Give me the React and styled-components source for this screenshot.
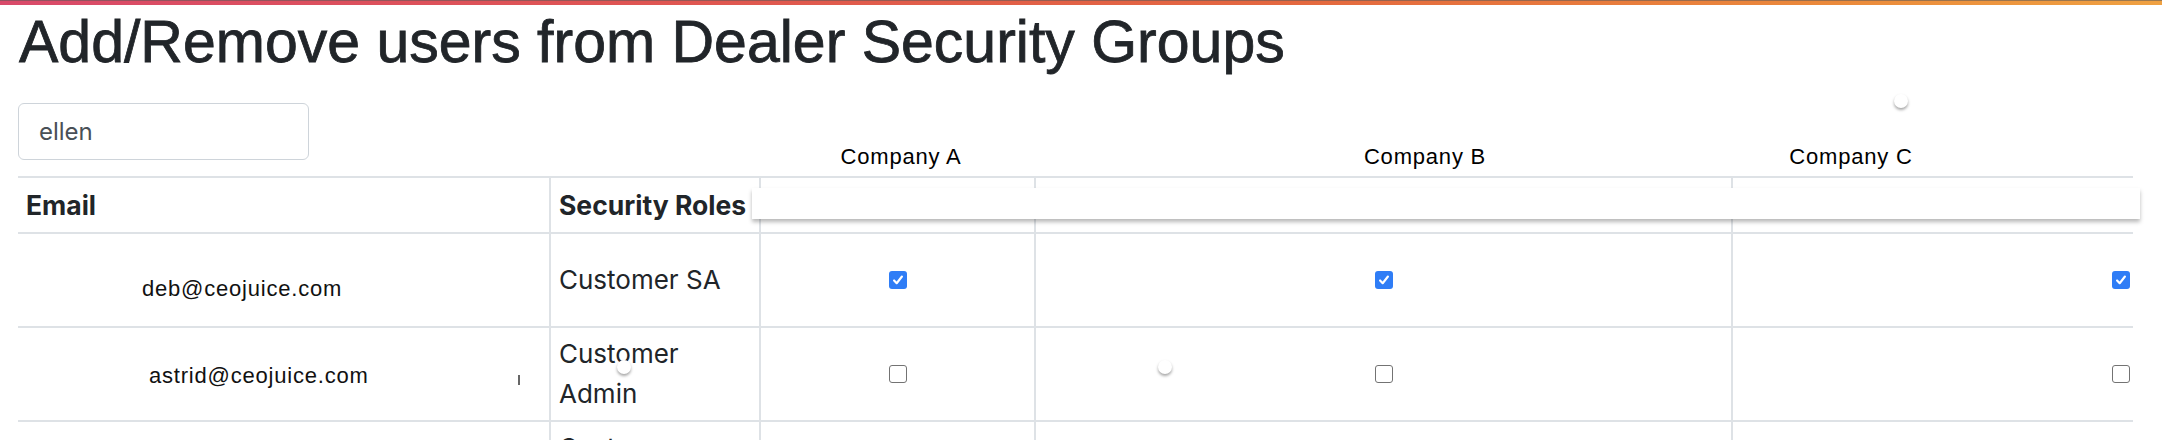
import React, { useState } from 'react';
import styled, { createGlobalStyle } from 'styled-components';

const GlobalStyle = createGlobalStyle`
  html, body { margin: 0; padding: 0; background: #fff; }
  body { font-family: Inter, "Noto Sans", sans-serif; color: #212529; }
  * { box-sizing: border-box; }
`;

const TopBar = styled.div`
  height: 5px;
  border-top: 1px solid rgba(90, 90, 90, 0.55);
  background: linear-gradient(90deg, #d94a6a 0%, #df5552 30%, #e4683f 60%, #eb8a3b 85%, #efa142 100%);
`;

const Page = styled.div`
  position: relative;
  padding: 0 29px 0 18px;
`;

const Title = styled.h1`
  margin: 2px 0 25px 1px;
  font-family: "Liberation Sans", Arial, sans-serif;
  font-weight: 400;
  font-size: 59px;
  line-height: 1.2;
  color: #212529;
  -webkit-text-stroke: 0.8px #212529;
`;

const Toolbar = styled.div`
  display: flex;
  align-items: flex-end;
  height: 73px;
`;

const Search = styled.input`
  width: 291px;
  height: 57px;
  margin-bottom: 16px;
  padding: 0 20px;
  border: 1.5px solid #ced4da;
  border-radius: 6px;
  font: 400 24px Inter, sans-serif;
  color: #495057;
  outline: none;
`;

const CompanyLabel = styled.span`
  width: 200px;
  margin-left: ${p => p.$gap}px;
  margin-bottom: 6px;
  text-align: center;
  font: 22px/26px "Liberation Sans", Arial, sans-serif;
  letter-spacing: 0.8px;
  color: #000;
`;

const Table = styled.div`
  position: relative;
  width: 2115px;
`;

const Row = styled.div`
  display: grid;
  grid-template-columns: 531px 210px 275px 697px 402px;
  height: ${p => p.$h}px;
  border-top: 2px solid #dee2e6;
`;

const Cell = styled.div`
  position: relative;
  display: flex;
  align-items: center;
  justify-content: ${p => p.$justify || 'flex-start'};
  padding: 0 ${p => p.$right ?? 8}px 0 8px;
  border-left: ${p => (p.$first ? 'none' : '2px solid #dee2e6')};
`;

const HeadCell = styled(Cell)`
  font-weight: 700;
  font-size: 26.5px;
  color: #212529;
  white-space: nowrap;
`;

const EmailCell = styled(Cell)`
  padding: ${p => p.$drop}px 0 0 ${p => p.$indent}px;
  font: 22px "Liberation Sans", Arial, sans-serif;
  letter-spacing: 0.8px;
  color: #111;
`;

const RoleCell = styled(Cell)`
  font-size: 26px;
  line-height: 40px;
  color: #212529;
`;

const Caret = styled.span`
  position: absolute;
  left: 500px;
  top: 47px;
  width: 1.5px;
  height: 10px;
  background: #666;
`;

const StickyShade = styled.div`
  position: absolute;
  left: 734px;
  top: 12px;
  width: 1388px;
  height: 31px;
  background: #fff;
  box-shadow: 0 3px 4px rgba(0, 0, 0, 0.28);
  z-index: 2;
`;

const Box = styled.button`
  width: 18px;
  height: 18px;
  padding: 0;
  border-radius: 3px;
  border: ${p => (p.$on ? '0' : '1.5px solid #737373')};
  background: ${p => (p.$on ? '#2f7df6' : '#fff')};
  display: flex;
  align-items: center;
  justify-content: center;
  cursor: pointer;
`;

const Dot = styled.span`
  position: absolute;
  width: 14px;
  height: 14px;
  border-radius: 50%;
  background: #fff;
  box-shadow: 0 2px 3px rgba(0, 0, 0, 0.35);
  z-index: 3;
`;

const companies = [
  { name: 'Company A', gap: 492 },
  { name: 'Company B', gap: 324 },
  { name: 'Company C', gap: 226 },
];

const initialRows = [
  { email: 'deb@ceojuice.com', role: 'Customer SA', indent: 124, drop: 18, checks: [true, true, true] },
  { email: 'astrid@ceojuice.com', role: 'Customer Admin', indent: 131, drop: 4, caret: true, checks: [false, false, false] },
  { email: 'ellen@ceojuice.com', role: 'Customer Billing', indent: 124, drop: 10, checks: [false, false, false] },
];

const dots = [
  { x: 1894, y: 87 },
  { x: 617, y: 353 },
  { x: 1158, y: 353 },
];

function Check({ on, onClick }) {
  return (
    <Box $on={on} onClick={onClick} aria-pressed={on}>
      {on && (
        <svg width="14" height="14" viewBox="0 0 16 16">
          <path d="M3.5 8.5l3 3.2L12.5 4" fill="none" stroke="#fff" strokeWidth="2.4" strokeLinecap="round" strokeLinejoin="round" />
        </svg>
      )}
    </Box>
  );
}

export default function App() {
  const [query, setQuery] = useState('ellen');
  const [rows, setRows] = useState(initialRows);

  const toggle = (r, c) =>
    setRows(rows.map((row, i) =>
      i === r ? { ...row, checks: row.checks.map((v, j) => (j === c ? !v : v)) } : row
    ));

  return (
    <>
      <GlobalStyle />
      <TopBar />
      <Page>
        <Title>Add/Remove users from Dealer Security Groups</Title>
        <Toolbar>
          <Search value={query} onChange={e => setQuery(e.target.value)} />
          {companies.map(c => (
            <CompanyLabel key={c.name} $gap={c.gap}>{c.name}</CompanyLabel>
          ))}
        </Toolbar>
        <Table>
          <Row $h={56}>
            <HeadCell $first>Email</HeadCell>
            <HeadCell>Security Roles</HeadCell>
            <HeadCell />
            <HeadCell />
            <HeadCell />
          </Row>
          <StickyShade />
          {rows.map((row, r) => (
            <Row key={row.email} $h={94}>
              <EmailCell $first $indent={row.indent} $drop={row.drop}>
                {row.email}
                {row.caret && <Caret />}
              </EmailCell>
              <RoleCell>{row.role}</RoleCell>
              {row.checks.map((on, c) => (
                <Cell
                  key={c}
                  $justify={c === 2 ? 'flex-end' : 'center'}
                  $right={c === 2 ? 3 : 8}
                >
                  <Check on={on} onClick={() => toggle(r, c)} />
                </Cell>
              ))}
            </Row>
          ))}
        </Table>
        {dots.map((d, i) => (
          <Dot key={i} style={{ left: d.x, top: d.y }} />
        ))}
      </Page>
    </>
  );
}
